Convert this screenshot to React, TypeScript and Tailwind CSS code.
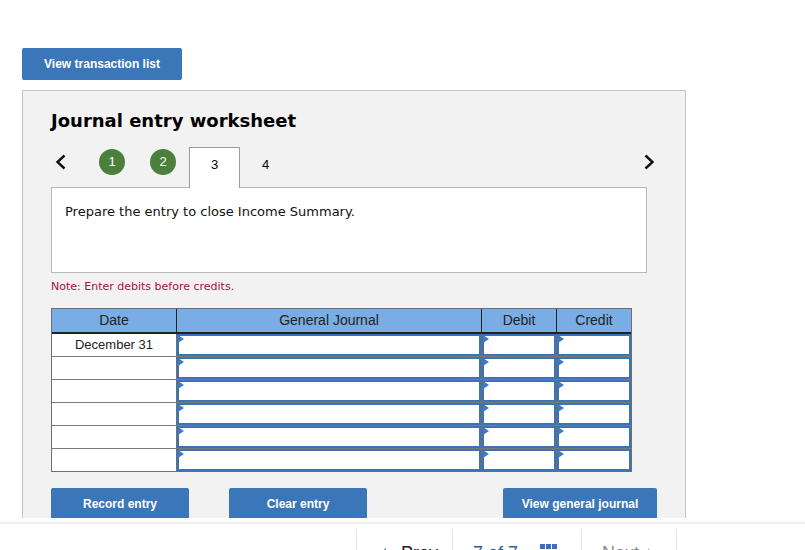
import React from 'react'

const rows = [
	{ date: 'December 31' },
	{ date: '' },
	{ date: '' },
	{ date: '' },
	{ date: '' },
	{ date: '' },
]

const verdana = "font-['DejaVu_Sans',Verdana,sans-serif]"
const arial = "font-['Liberation_Sans',Arial,sans-serif]"

/** Entry field inside a journal cell, with the small blue marker at its corner */
const EntryCell: React.FC = () => (
	<div className="relative h-full border-l border-[#6f6f6f] bg-white">
		<div className="h-full border-2 border-[#3c73b6] bg-white" />
		<span className="absolute left-[1px] top-[1px] h-0 w-0 border-y-[4px] border-l-[6px] border-y-transparent border-l-[#3d7bc9]" />
	</div>
)

const BlueButton: React.FC<{ label: string; className?: string }> = ({ label, className }) => (
	<button
		className={`h-[32px] rounded-[2px] bg-[#3b76b9] text-[12px] font-bold text-white ${arial} ${className ?? ''}`}
	>
		{label}
	</button>
)

export default function App() {
	return (
		<div className="relative h-[550px] w-[805px] overflow-hidden bg-white">
			<div className="pl-[22px] pt-[48px]">
				<BlueButton label="View transaction list" className="w-[160px]" />

				{/* worksheet panel */}
				<div className="mt-[10px] w-[664px] border border-[#c4c4c4] bg-[#f2f2f2] pb-[40px] pl-[28px] pr-[38px] pt-[19px]">
					<h2 className={`text-[18px] font-bold leading-[22px] text-black ${verdana}`}>Journal entry worksheet</h2>

					{/* step tabs */}
					<div className="mt-[15px] flex h-[40px] items-start">
						<div className="ml-[4px] mt-[7px] flex h-[16px] w-[12px] items-center">
							<svg width="12" height="16" viewBox="0 0 12 16">
								<path d="M9.5 1.5 2.5 8l7 6.5" fill="none" stroke="#111" strokeWidth="2.4" />
							</svg>
						</div>
						<div className="ml-[32px] mt-[2px] flex h-[26px] w-[26px] items-center justify-center rounded-full bg-[#4a7f3c] text-[13px] text-white">
							<span className={arial}>1</span>
						</div>
						<div className="ml-[25px] mt-[2px] flex h-[26px] w-[26px] items-center justify-center rounded-full bg-[#4a7f3c] text-[13px] text-white">
							<span className={arial}>2</span>
						</div>
						<div className={`relative z-10 ml-[13px] flex h-[41px] w-[51px] justify-center border border-b-0 border-[#9a9a9a] bg-white pt-[7px] text-[13px] text-black ${arial}`}>
							3
						</div>
						<div className={`flex h-[40px] w-[51px] justify-center pt-[8px] text-[13px] text-black ${arial}`}>4</div>
						<div className="ml-auto mr-[-8px] mt-[7px] flex h-[16px] w-[12px] items-center">
							<svg width="12" height="16" viewBox="0 0 12 16">
								<path d="M2.5 1.5 9.5 8l-7 6.5" fill="none" stroke="#111" strokeWidth="2.4" />
							</svg>
						</div>
					</div>

					{/* prompt */}
					<div className="h-[86px] w-[596px] border border-[#b9b9b9] bg-white px-[13px] pt-[14px]">
						<p className={`text-[13px] text-[#111] ${verdana}`}>Prepare the entry to close Income Summary.</p>
					</div>

					<p className={`mt-[6px] text-[11px] text-[#a3123a] ${verdana}`}>Note: Enter debits before credits.</p>

					{/* journal grid */}
					<div className={`mt-[12px] w-[581px] border border-[#6f6f6f] ${arial} text-[13px]`}>
						<div className="grid h-[25px] grid-cols-[124px_305px_75px_75px] border-b-2 border-[#222] bg-[#79ade3] text-[14px] text-[#222]">
							<div className="flex items-center justify-center">Date</div>
							<div className="flex items-center justify-center border-l border-[#222]">General Journal</div>
							<div className="flex items-center justify-center border-l border-[#222]">Debit</div>
							<div className="flex items-center justify-center border-l border-[#222]">Credit</div>
						</div>
						{rows.map((r, i) => (
							<div
								key={i}
								className={`grid grid-cols-[124px_305px_75px_75px] ${i > 0 ? 'h-[23px] border-t border-[#7a7a7a]' : 'h-[22px]'}`}
							>
								<div className="flex items-center justify-center bg-white text-[#222]">{r.date}</div>
								<EntryCell />
								<EntryCell />
								<EntryCell />
							</div>
						))}
					</div>

					{/* actions */}
					<div className="mt-[16px] flex">
						<BlueButton label="Record entry" className="w-[138px]" />
						<BlueButton label="Clear entry" className="ml-[40px] w-[138px]" />
						<BlueButton label="View general journal" className="ml-auto mr-[-10px] w-[154px]" />
					</div>
				</div>
			</div>

			{/* pager bar pinned to the bottom of the page */}
			<div className="absolute bottom-0 left-0 right-0 top-[518px] bg-white">
				<div className="mt-[4px] h-[2px] bg-[#efefef]" />
				<div className={`mt-[5px] flex h-[30px] ${arial} text-[18px] leading-[27px]`}>
					<div className="w-[356px]" />
					<div className="flex w-[96px] items-start gap-[14px] border-l border-[#e3e3e3] pl-[20px] pt-[11px] text-[#222]">
						<svg width="10" height="14" viewBox="0 0 10 14" className="mt-[7px]">
							<path d="M9 1 2 7l7 6z" fill="#3b76b9" />
						</svg>
						<span>Prev</span>
					</div>
					<div className="flex w-[129px] items-start gap-[22px] border-l border-[#e3e3e3] pl-[20px] pt-[11px] text-[#2d5fa0]">
						<span>7 of 7</span>
						<div className="mt-[4px] grid grid-cols-3 gap-[1px]">
							<span className="h-[5px] w-[5px] bg-[#3b6fc2]" />
							<span className="h-[5px] w-[5px] bg-[#3b6fc2]" />
							<span className="h-[5px] w-[5px] bg-[#3b6fc2]" />
							<span className="h-[5px] w-[5px] bg-[#3b6fc2]" />
							<span className="h-[5px] w-[5px] bg-[#3b6fc2]" />
							<span className="h-[5px] w-[5px] bg-[#3b6fc2]" />
						</div>
					</div>
					<div className="flex w-[96px] items-start gap-[8px] border-x border-[#e3e3e3] pl-[20px] pt-[11px] text-[#8a8a8a]">
						<span>Next</span>
						<svg width="10" height="14" viewBox="0 0 10 14" className="mt-[7px]">
							<path d="M1 1l7 6-7 6z" fill="#b8c8de" />
						</svg>
					</div>
				</div>
			</div>
		</div>
	)
}
